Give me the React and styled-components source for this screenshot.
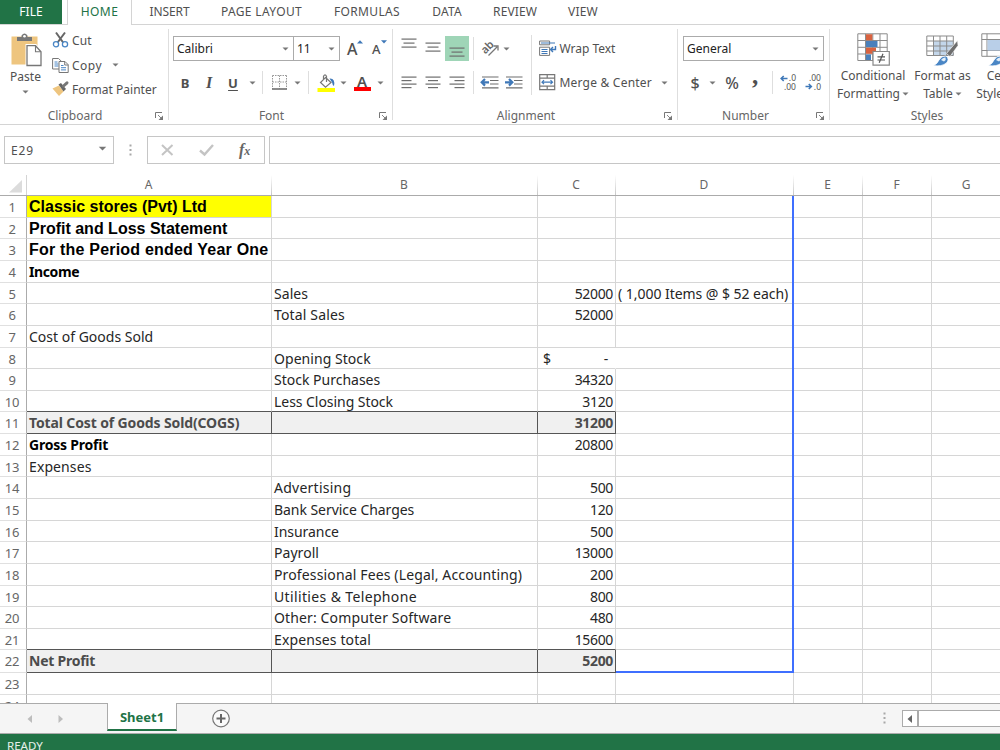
import React from "react";
import styled, { createGlobalStyle } from "styled-components";

const tabs = [
  { name: "HOME", left: 5, width: 65, active: true, spacing: 0.4 },
  { name: "INSERT", left: 4, width: 67, spacing: -0.1 },
  { name: "PAGE LAYOUT", left: 6, width: 105, spacing: 0.35 },
  { name: "FORMULAS", left: 6, width: 94, spacing: 0.35 },
  { name: "DATA", left: 6, width: 54, spacing: 0.2 },
  { name: "REVIEW", left: 5, width: 72, spacing: 0.1 },
  { name: "VIEW", left: 5, width: 54, spacing: 0.2 },
];

const columns = ["A", "B", "C", "D", "E", "F", "G"];

const rows = [
  { h: 22, a: "Classic stores (Pvt) Ltd", kind: "title", mark: true, as: 0 },
  { h: 21, a: "Profit and Loss Statement", kind: "title", as: 0 },
  { h: 22, a: "For the Period ended Year One", kind: "title", as: 0.2 },
  { h: 22, a: "Income", kind: "bold", as: -0.4 },
  { h: 21, b: "Sales", c: "52000", d: "( 1,000 Items @ $ 52 each)" },
  { h: 22, b: "Total Sales", c: "52000", bs: 0.15 },
  { h: 22, a: "Cost of Goods Sold", as: 0 },
  { h: 21, b: "Opening Stock", money: true },
  { h: 22, b: "Stock Purchases", c: "34320", bs: 0 },
  { h: 21, b: "Less Closing Stock", c: "3120", beforeTotal: true, bs: -0.05 },
  { h: 22, a: "Total Cost of Goods Sold(COGS)", c: "31200", kind: "total", as: -0.13 },
  { h: 22, a: "Gross Profit", c: "20800", kind: "bold", as: -0.22 },
  { h: 21, a: "Expenses", as: 0.1 },
  { h: 22, b: "Advertising", c: "500", bs: 0.25 },
  { h: 22, b: "Bank Service Charges", c: "120", bs: -0.05 },
  { h: 21, b: "Insurance", c: "500", bs: -0.05 },
  { h: 22, b: "Payroll", c: "13000" },
  { h: 22, b: "Professional Fees (Legal, Accounting)", c: "200", bs: 0.14 },
  { h: 21, b: "Utilities & Telephone", c: "800", bs: 0.36 },
  { h: 22, b: "Other: Computer Software", c: "480", bs: 0.13 },
  { h: 21, b: "Expenses total", c: "15600", beforeTotal: true, bs: 0.12 },
  { h: 23, a: "Net Profit", c: "5200", kind: "total", as: -0.25 },
  { h: 22 },
  { h: 22 },
];

/* ---------- icons ---------- */

const Caret = () => (
  <svg width="7" height="4" viewBox="0 0 7 4">
    <path d="M0.500 0.500h6l-3 3z" fill="#777" />
  </svg>
);

const PasteIcon = () => (
  <svg width="32" height="34" viewBox="0 0 32 34">
    <rect x="1.500" y="3.500" width="26" height="28" fill="#eec57f" />
    <path d="M7 8V4h4.500V2.500Q14.500-1.500 17.500 2.500V4H22v4z" fill="#777" />
    <circle cx="14.500" cy="3.200" r="1.300" fill="#fff" />
    <path d="M17 12.500h8.500l5 6V32.500H17z" fill="#fff" stroke="#fff" strokeWidth="3" />
    <path d="M17 12.700h8.500l5.500 6V32.500h-14z" fill="#fff" stroke="#777" strokeWidth="1.300" />
    <path d="M25.500 12.700v6h5.500" fill="none" stroke="#777" strokeWidth="1.100" />
  </svg>
);

const CutIcon = () => (
  <svg width="17" height="17" viewBox="0 0 17 17">
    <path d="M4 0.500l7.500 10.500M13 0.500L5.200 11" stroke="#666" strokeWidth="2" fill="none" />
    <circle cx="4" cy="12.300" r="2.600" fill="#fff" stroke="#4a86c5" strokeWidth="1.300" />
    <circle cx="13" cy="12.300" r="2.600" fill="#fff" stroke="#4a86c5" strokeWidth="1.300" />
  </svg>
);

const CopyIcon = () => (
  <svg width="17" height="17" viewBox="0 0 17 17">
    <path d="M0.600 1.500h6l3 3V12H0.600z" fill="#fff" stroke="#777" />
    <path d="M2.500 5h3M2.500 7h4M2.500 9h4" stroke="#4a86c5" />
    <path d="M7 4.500h6l3.200 3.200V15.500H7z" fill="#fff" stroke="#777" />
    <path d="M12.700 4.500v3.500h3.500" fill="none" stroke="#777" />
    <path d="M9 8.500h2.500M9 10.700h5M9 12.900h5" stroke="#4a86c5" />
  </svg>
);

const PainterIcon = () => (
  <svg width="17" height="17" viewBox="0 0 17 17">
    <path d="M0.500 7.500L7 4.500l4.500 6-4.500 4.500z" fill="#eec57f" />
    <path d="M6.500 3.500l2.500-1.500L14 8l-2.500 2.500z" fill="#666" />
    <path d="M11.500 5l3.500-3.200" stroke="#777" strokeWidth="3" strokeLinecap="round" />
  </svg>
);

const LauncherIcon = () => (
  <svg width="9" height="9" viewBox="0 0 9 9">
    <path d="M0.500 6V0.500H7" fill="none" stroke="#777" />
    <path d="M3 3l4 4" stroke="#777" strokeWidth="0.900" />
    <path d="M8 3.500V8H3.500z" fill="#777" />
  </svg>
);

const ResizeMark = ({ down }) => (
  <svg width="6" height="4" viewBox="0 0 6 4">
    <path d={down ? "M0 0.300h6l-3 3.200z" : "M0 3.500h6l-3-3.200z"} fill="#3f78b8" />
  </svg>
);

const BorderIcon = () => (
  <svg width="15" height="15" viewBox="0 0 15 15">
    <path d="M0.500 0.500h14M0.500 7h14M0.500 0.500v13M7.500 0.500v13M14.500 0.500v13" fill="none" stroke="#999" strokeDasharray="1.500 1" />
    <path d="M0 14h15" stroke="#666" strokeWidth="1.500" />
  </svg>
);

const FillIcon = () => (
  <svg width="19" height="18" viewBox="0 0 19 18">
    <path d="M8.500 3.500l5.500 5-5.500 4.700L3.500 8.500z" fill="#fff" stroke="#777" strokeWidth="1.200" />
    <path d="M6.500 5V2.200Q8-0.500 9.500 2.200V8" fill="none" stroke="#777" strokeWidth="1.200" />
    <path d="M12.500 4.500q6-0.500 4.500 7.500-1.500-0.500-1.900-3.500z" fill="#3f78b8" />
    <rect x="0.500" y="14" width="17.500" height="4" fill="#ffff00" />
  </svg>
);

const LinesIcon = ({ lines, gap = 3.5 }) => (
  <svg width="16" height="13" viewBox="0 0 16 13">
    {lines.map(([x, w], i) => (
      <rect key={i} x={x} y={0.5 + i * gap} width={w} height="1.200" fill="#6e6e6e" />
    ))}
  </svg>
);

const vertical = [[0.5, 15], [2.5, 11], [0.5, 15]];
const leftLines = [[0.5, 15], [0.5, 10], [0.5, 15], [0.5, 10]];
const centerLines = [[0.5, 15], [3, 10], [0.5, 15], [3, 10]];
const rightLines = [[0.5, 15], [5.5, 10], [0.5, 15], [5.5, 10]];

const AngleIcon = () => (
  <svg width="19" height="17" viewBox="0 0 19 17">
    <text x="2" y="13" transform="rotate(-45 5 11)" fontFamily="Noto Sans, sans-serif" fontSize="11" fontWeight="600" fill="#666">ab</text>
    <path d="M7.500 15.500L16 7M12.500 6h4.500v4.500" fill="none" stroke="#777" strokeWidth="1.300" />
  </svg>
);

const IndentIcon = ({ more }) => (
  <svg width="18" height="13" viewBox="0 0 18 13">
    <path d="M1 1h16.500M9 4.500h8.500M9 8h8.500M1 11.800h16.500" stroke="#6e6e6e" strokeWidth="1.200" />
    <path d="M0 3h8v6.500H0z" fill="#fff" />
    <path d={more ? "M0 6.300h7M4 3l3.300 3.300L4 9.600" : "M8 6.300H1M4 3L0.700 6.300 4 9.600"} fill="none" stroke="#3f78b8" strokeWidth="2.200" />
  </svg>
);

const WrapIcon = () => (
  <svg width="18" height="17" viewBox="0 0 18 17">
    <path d="M0.600 1h10v3.800h-10zM0.600 7.200h10v8.200h-10z" fill="#fff" stroke="#777" />
    <path d="M2 3h14M2.500 9.500h6M2.500 11.500h6M2.500 13.500h6" stroke="#3f78b8" strokeWidth="1.100" />
    <path d="M16.500 6v3.500H12M14 7l-2.500 2.500L14 12" fill="none" stroke="#3f78b8" strokeWidth="1.400" />
  </svg>
);

const MergeIcon = () => (
  <svg width="17" height="17" viewBox="0 0 17 17">
    <path d="M0.700 0.700h15v15h-15zM0.700 4.200h15M0.700 12.200h15M8.200 0.700v3.500M8.200 12.200v3.500" fill="#fff" stroke="#777" strokeWidth="1.200" />
    <path d="M3 8.200h10.500M5 6.200l-2 2 2 2M11.500 6.200l2 2-2 2" fill="none" stroke="#3f78b8" strokeWidth="1.200" />
  </svg>
);

const DecimalIcon = ({ less }) => (
  <svg width="17" height="17" viewBox="0 0 17 17" fontFamily="Noto Sans, sans-serif" fontSize="8.500" fill="#555">
    <text x="16" y="7" textAnchor="end">{less ? ".00" : ".0"}</text>
    <text x="16" y="15.500" textAnchor="end">{less ? ".0" : ".00"}</text>
    <path
      d={less ? "M0.500 12.500H6M3.800 10L6.300 12.500 3.800 15" : "M7.500 4.500H1.500M3.700 2L1.200 4.500l2.500 2.500"}
      fill="none"
      stroke="#3f78b8"
      strokeWidth="1.600"
    />
  </svg>
);

const ConditionalIcon = () => (
  <svg width="33" height="34" viewBox="0 0 33 34">
    <path d="M0.800 0.800h29.400v26.700H0.800zM0.800 7.500h29.400M0.800 14.300h29.400M0.800 21h29.400M8.500 0.800v26.700M15.800 0.800v26.700M23 0.800v26.700" fill="#fff" stroke="#8b8b8b" />
    <path d="M9 1.300h6.300v6H9zM9 14.800h10v6H9z" fill="#d9623f" />
    <path d="M9 8h11.500v6H9zM9 21.500h5v5.500H9z" fill="#4a80bb" />
    <path d="M16 18.500h16.300v13.700H16z" fill="#fff" stroke="#888" strokeWidth="1.200" />
    <path d="M20.500 23.800h7.500M20.500 27h7.500M26 20.800l-3.800 9" stroke="#555" strokeWidth="1.200" />
  </svg>
);

const brush = (
  <>
    <path d="M20.500 20.500l11-13 0.500 5-8 11z" fill="#6e6e6e" stroke="#fff" strokeWidth="0.600" />
    <path d="M7 32.500q4-1 6-5.500 2.500-4.500 7-4 4 3 0.500 7-5 4-13.500 2.500z" fill="#4a86c5" stroke="#fff" strokeWidth="0.800" />
    <path d="M15 27q2-3 4.500-2.500 1 2-1.500 4z" fill="#e3eef8" />
  </>
);

const TableIcon = () => (
  <svg width="33" height="34" viewBox="0 0 33 34">
    <path d="M7 8h20.500v14.500H7z" fill="#c3d6ea" />
    <path d="M0.800 3h26.500v19.500H0.800zM0.800 8h26.500M0.800 13h26.500M0.800 18h26.500M7.500 3v19.500M14 3v19.500M20.700 3v19.500" fill="none" stroke="#8b8b8b" />
    {brush}
  </svg>
);

const CellStylesIcon = () => (
  <svg width="33" height="34" viewBox="0 0 33 34">
    <path d="M0.800 0.800h30v22.500h-30zM0.800 6.500h30M0.800 17.500h30M6 0.800v22.500" fill="#fff" stroke="#8b8b8b" />
    <path d="M6.500 7h24v10.500h-24z" fill="#b9cfe8" />
    {brush}
  </svg>
);

const Triangle = ({ right, color }) => (
  <svg width="6" height="8" viewBox="0 0 6 8">
    <path d={right ? "M0.500 0v8L5 4z" : "M5 0v8L0.500 4z"} fill={color} />
  </svg>
);

const Dots = () => (
  <svg width="3" height="13" viewBox="0 0 3 13">
    <path d="M0.500 0.500h2v2h-2zM0.500 5h2v2h-2zM0.500 9.500h2v2h-2z" fill="#a8a8a8" />
  </svg>
);

const AddSheetIcon = () => (
  <svg width="19" height="19" viewBox="0 0 19 19">
    <circle cx="9" cy="9.500" r="8.300" fill="#fafafa" stroke="#777" strokeWidth="1.200" />
    <path d="M4.500 9.500h9M9 5v9" stroke="#666" strokeWidth="2" />
  </svg>
);

/* ---------- page ---------- */

function ClipboardGroup() {
  return (
    <Group $width={169}>
      <GroupBody>
        <BigButton $width={51} $gap={1}>
          <PasteIcon />
          <BigLabel>Paste</BigLabel>
          <Caret />
        </BigButton>
        <SmallButtons>
          <SmallButton><CutIcon /><span>Cut</span></SmallButton>
          <SmallButton $spacing={0.5}><CopyIcon /><span>Copy</span><Caret /></SmallButton>
          <SmallButton $spacing={0.02}><PainterIcon /><span>Format Painter</span></SmallButton>
        </SmallButtons>
      </GroupBody>
      <GroupLabel $shift={-9}>Clipboard</GroupLabel>
      <Launcher><LauncherIcon /></Launcher>
    </Group>
  );
}

function FontGroup() {
  return (
    <Group $width={224}>
      <Stack>
        <Line>
          <Combo $width={121}>Calibri<Caret /></Combo>
          <Combo $width={47} $joined>11<Caret /></Combo>
          <FontSizer $size={16}>A<ResizeMark /></FontSizer>
          <FontSizer $size={13}>A<ResizeMark down /></FontSizer>
        </Line>
        <Line>
          <Letter $bold>B</Letter>
          <Letter $italic>I</Letter>
          <Letter $bold $under>U</Letter>
          <Slot $width={14}><Caret /></Slot>
          <Divider $before={3} $after={4} />
          <Slot $width={24}><BorderIcon /></Slot>
          <Slot $width={13}><Caret /></Slot>
          <Divider $before={4} $after={5} />
          <Slot $width={24}><FillIcon /></Slot>
          <Slot $width={11}><Caret /></Slot>
          <Slot $width={26}><FontColor>A</FontColor></Slot>
          <Slot $width={11}><Caret /></Slot>
        </Line>
      </Stack>
      <GroupLabel $shift={-9}>Font</GroupLabel>
      <Launcher><LauncherIcon /></Launcher>
    </Group>
  );
}

function AlignmentGroup() {
  return (
    <Group $width={285}>
      <GroupBody>
        <Stack>
          <Line>
            <Slot $width={24} $lift={-4}><LinesIcon lines={vertical} gap={4} /></Slot>
            <Slot $width={24}><LinesIcon lines={vertical} gap={4} /></Slot>
            <Slot $width={24} $on $lift={5}><LinesIcon lines={vertical} gap={4} /></Slot>
            <Divider $before={4} $after={4} />
            <Slot $width={24}><AngleIcon /></Slot>
            <Slot $width={8}><Caret /></Slot>
          </Line>
          <Line>
            <Slot $width={24}><LinesIcon lines={leftLines} /></Slot>
            <Slot $width={24}><LinesIcon lines={centerLines} /></Slot>
            <Slot $width={24}><LinesIcon lines={rightLines} /></Slot>
            <Divider $before={4} $after={4} />
            <Slot $width={24}><IndentIcon /></Slot>
            <Slot $width={24}><IndentIcon more /></Slot>
          </Line>
        </Stack>
        <TallDivider />
        <Stack $pad={8}>
          <Line><WrapIcon /><LineText $left={2}>Wrap Text</LineText></Line>
          <Line><MergeIcon /><LineText $left={3} $spacing={0.22}>Merge &amp; Center</LineText><Slot $width={25}><Caret /></Slot></Line>
        </Stack>
      </GroupBody>
      <GroupLabel $shift={-9}>Alignment</GroupLabel>
      <Launcher><LauncherIcon /></Launcher>
    </Group>
  );
}

function NumberGroup() {
  return (
    <Group $width={152}>
      <Stack $pad={5}>
        <Line><Combo $width={141}>General<Caret /></Combo></Line>
        <Line>
          <Symbol $width={24} $size={16}>$</Symbol>
          <Slot $width={11}><Caret /></Slot>
          <Symbol $width={28} $size={16}>%</Symbol>
          <Symbol $width={18} $size={25} $serif>,</Symbol>
          <Divider $before={8} $after={4} />
          <Slot $width={23}><DecimalIcon /></Slot>
          <Slot $width={26}><DecimalIcon less /></Slot>
        </Line>
      </Stack>
      <GroupLabel $shift={-8}>Number</GroupLabel>
      <Launcher><LauncherIcon /></Launcher>
    </Group>
  );
}

function StylesGroup() {
  return (
    <Group $width={194} $last>
      <GroupBody>
        <BigButton $width={86}>
          <ConditionalIcon />
          <BigLabel>Conditional</BigLabel>
          <BigLabel>Formatting<Caret /></BigLabel>
        </BigButton>
        <BigButton $width={53}>
          <TableIcon />
          <BigLabel>Format as</BigLabel>
          <BigLabel>Table<Caret /></BigLabel>
        </BigButton>
        <BigButton $width={56}>
          <CellStylesIcon />
          <BigLabel>Cell</BigLabel>
          <BigLabel>Styles<Caret /></BigLabel>
        </BigButton>
      </GroupBody>
      <GroupLabel $shift={0}>Styles</GroupLabel>
    </Group>
  );
}

function Sheet() {
  return (
    <SheetArea>
      <ColumnHeads>
        <Corner><svg width="14" height="13" viewBox="0 0 14 13"><path d="M13 0v12.500H0z" fill="#dcdcdc" /></svg></Corner>
        {columns.map((c) => <ColumnHead key={c}>{c}</ColumnHead>)}
      </ColumnHeads>
      <Rows>
        {rows.map((r, i) => {
          const total = r.kind === "total";
          const edge = total || r.beforeTotal;
          return (
            <Row key={i} $height={r.h}>
              <RowHead>{i + 1}</RowHead>
              <Cell $kind={r.kind} $fill={r.mark ? "#ffff00" : total && "#f0f0f0"} $edge={edge} $side={total} $spacing={r.as}>{r.a}</Cell>
              <Cell $fill={total && "#f0f0f0"} $edge={edge} $side={total} $spacing={r.bs}>{r.b}</Cell>
              <Cell $number $kind={total ? "total" : ""} $fill={total && "#f0f0f0"} $edge={edge} $side={total} $open={r.money}>
                {r.money ? <Money><span>$</span><span>-</span></Money> : r.c}
              </Cell>
              <Cell $spacing={-0.04}>{r.d}</Cell>
              <Cell /><Cell /><Cell />
            </Row>
          );
        })}
        <RangeSide />
        <RangeBottom />
      </Rows>
    </SheetArea>
  );
}

function App() {
  return (
    <Window>
      <GlobalStyle />
      <TabBar>
        <FileTab>FILE</FileTab>
        {tabs.map((t) => (
          <Tab key={t.name} $active={t.active} $left={t.left} $width={t.width} $spacing={t.spacing}>{t.name}</Tab>
        ))}
      </TabBar>
      <Ribbon>
        <ClipboardGroup />
        <FontGroup />
        <AlignmentGroup />
        <NumberGroup />
        <StylesGroup />
      </Ribbon>
      <FormulaBar>
        <NameBox>E29<Caret /></NameBox>
        <DotsSlot><Dots /></DotsSlot>
        <FormulaTools>
          <svg width="13" height="12" viewBox="0 0 13 12"><path d="M1 1l10.500 10M11.500 1L1 11" stroke="#c4c4c4" strokeWidth="2" /></svg>
          <svg width="15" height="12" viewBox="0 0 15 12"><path d="M1 6.500l4.500 4L14 1" fill="none" stroke="#c4c4c4" strokeWidth="2.400" /></svg>
          <Fx>f<small>x</small></Fx>
        </FormulaTools>
        <FormulaInput />
      </FormulaBar>
      <Sheet />
      <SheetTabs>
        <Arrows><Triangle color="#bdbdbd" /><Triangle right color="#bdbdbd" /></Arrows>
        <SheetTab>Sheet1</SheetTab>
        <AddSheet><AddSheetIcon /></AddSheet>
        <ScrollPart>
          <Dots />
          <ScrollArrow><Triangle color="#666" /></ScrollArrow>
          <ScrollTrack />
        </ScrollPart>
      </SheetTabs>
      <StatusBar>READY</StatusBar>
    </Window>
  );
}

export default App;

const GlobalStyle = createGlobalStyle`
  * {
    box-sizing: border-box;
  }
  body {
    margin: 0;
    overflow: hidden;
  }
  svg {
    display: block;
    flex-shrink: 0;
    overflow: visible;
  }
`;

const Window = styled.div`
  background: white;
  color: #505050;
  display: flex;
  flex-direction: column;
  font-family: "Noto Sans", "Open Sans", sans-serif;
  font-size: 12px;
  height: 750px;
  overflow: hidden;
  white-space: nowrap;
  width: 1000px;
`;

const TabBar = styled.nav`
  display: flex;
  flex-shrink: 0;
  height: 25px;
  box-shadow: inset 0 -1px #d4d4d4;
`;

const FileTab = styled.div`
  background: #217346;
  color: white;
  height: 24px;
  line-height: 23px;
  text-align: center;
  width: 62px;
`;

const Tab = styled.div`
  background: ${(p) => (p.$active ? "white" : "transparent")};
  border: solid ${(p) => (p.$active ? "#d4d4d4" : "transparent")};
  border-width: 0 1px;
  color: ${(p) => (p.$active ? "#217346" : "#505050")};
  letter-spacing: ${(p) => p.$spacing}px;
  line-height: 23px;
  margin-left: ${(p) => p.$left}px;
  text-align: center;
  width: ${(p) => p.$width}px;
`;

const Ribbon = styled.div`
  border-bottom: 1px solid #d4d4d4;
  display: flex;
  flex-shrink: 0;
  height: 100px;
  padding: 4px 0;
`;

const Group = styled.section`
  border-right: ${(p) => (p.$last ? "0" : "1px solid #dedede")};
  flex-shrink: 0;
  height: 91px;
  position: relative;
  width: ${(p) => p.$width}px;
`;

const GroupBody = styled.div`
  display: flex;
  height: 76px;
`;

const GroupLabel = styled.div`
  bottom: -4px;
  color: #666;
  left: 0;
  line-height: 16px;
  position: absolute;
  right: 0;
  text-align: center;
  text-indent: ${(p) => p.$shift * 2}px;
`;

const Launcher = styled.div`
  bottom: -1px;
  position: absolute;
  right: 4px;
`;

const BigButton = styled.div`
  align-items: center;
  display: flex;
  flex-direction: column;
  flex-shrink: 0;
  gap: ${(p) => p.$gap || 0}px;
  padding-top: 4px;
  width: ${(p) => p.$width}px;
`;

const BigLabel = styled.span`
  align-items: center;
  display: flex;
  gap: 2px;
  height: 18px;
  line-height: 18px;
  position: relative;
  & + svg {
    margin-top: 3px;
  }
`;

const SmallButtons = styled.div`
  display: flex;
  flex-direction: column;
`;

const SmallButton = styled.div`
  align-items: center;
  display: flex;
  gap: 3px;
  height: 24.5px;
  letter-spacing: ${(p) => p.$spacing || 0.1}px;
  padding-left: 1px;
  &:first-child {
    height: 24px;
    padding-bottom: 1px;
  }
  & span + svg {
    margin-left: 7px;
  }
`;

const Stack = styled.div`
  display: flex;
  flex-direction: column;
  gap: 9px;
  padding: 7px 0 0 ${(p) => p.$pad || 4}px;
`;

const Line = styled.div`
  align-items: center;
  display: flex;
  height: 25px;
`;

const LineText = styled.span`
  letter-spacing: ${(p) => p.$spacing || 0}px;
  margin-left: ${(p) => p.$left}px;
`;

const Combo = styled.div`
  align-items: center;
  border: 1px solid #ababab;
  color: #222;
  display: flex;
  height: 25px;
  justify-content: space-between;
  margin-left: ${(p) => (p.$joined ? -1 : 0)}px;
  padding: 0 4px 0 3px;
  width: ${(p) => p.$width}px;
`;

const FontSizer = styled.div`
  display: flex;
  font-size: ${(p) => p.$size}px;
  font-weight: 500;
  line-height: 22px;
  padding-left: 7px;
  width: 25px;
  & svg {
    margin-top: 2px;
  }
`;

const Slot = styled.div`
  align-items: center;
  background: ${(p) => (p.$on ? "#9fd5b7" : "transparent")};
  display: flex;
  flex-shrink: 0;
  height: 25px;
  justify-content: center;
  width: ${(p) => p.$width}px;
  & svg {
    margin-top: ${(p) => (p.$lift || 0) * 2}px;
  }
`;

const Letter = styled(Slot).attrs({ $width: 24 })`
  font-family: ${(p) => (p.$italic ? '"Liberation Serif", serif' : "inherit")};
  font-size: ${(p) => (p.$italic ? 16 : 13)}px;
  font-style: ${(p) => (p.$italic ? "italic" : "normal")};
  font-weight: bold;
  text-decoration: ${(p) => (p.$under ? "underline" : "none")};
  text-underline-offset: 2px;
`;

const FontColor = styled.div`
  border-bottom: 4px solid #f00;
  font-size: 15px;
  font-weight: 600;
  height: 17px;
  line-height: 14px;
  text-align: center;
  width: 17px;
`;

const Symbol = styled(Slot)`
  font-family: ${(p) => (p.$serif ? '"Liberation Serif", serif' : "inherit")};
  font-size: ${(p) => p.$size}px;
  font-weight: ${(p) => (p.$serif ? "bold" : 500)};
  padding-bottom: ${(p) => (p.$serif ? 14 : 0)}px;
`;

const Divider = styled.div`
  background: #dedede;
  height: 23px;
  margin: 0 ${(p) => p.$after}px 0 ${(p) => p.$before}px;
  width: 1px;
`;

const TallDivider = styled.div`
  background: #dedede;
  height: 60px;
  margin: 6px 0 0 5px;
  width: 1px;
`;

const FormulaBar = styled.div`
  display: flex;
  flex-shrink: 0;
  height: 50px;
  padding: 11px 0 0 4px;
`;

const NameBox = styled.div`
  align-items: center;
  border: 1px solid #c6c6c6;
  display: flex;
  height: 28px;
  justify-content: space-between;
  letter-spacing: 0.8px;
  padding: 0 6px;
  width: 110px;
  & svg {
    height: 5px;
    margin-bottom: 3px;
    width: 9px;
  }
`;

const DotsSlot = styled.div`
  align-items: center;
  display: flex;
  height: 28px;
  justify-content: center;
  width: 33px;
`;

const FormulaTools = styled.div`
  align-items: center;
  border: 1px solid #c6c6c6;
  display: flex;
  gap: 25px;
  height: 28px;
  padding-left: 13px;
  width: 118px;
`;

const Fx = styled.span`
  color: #666;
  font-family: "Liberation Serif", serif;
  font-size: 16px;
  font-style: italic;
  font-weight: bold;
  line-height: 20px;
  & small {
    font-size: 12px;
  }
`;

const FormulaInput = styled.div`
  border: 1px solid #c6c6c6;
  border-right: 0;
  flex: 1;
  height: 28px;
  margin-left: 4px;
`;

const SheetArea = styled.main`
  height: 528px;
  overflow: hidden;
`;

const ColumnHeads = styled.div`
  border-bottom: 1px solid #ababab;
  display: grid;
  grid-template-columns: 27px 245px 266px 78px 178px 69px 69px 70px;
  height: 21px;
`;

const Corner = styled.div`
  border-right: 1px solid #d4d4d4;
  padding: 5px 0 0 9px;
`;

const ColumnHead = styled.div`
  background: linear-gradient(#fff, #c8c8c8) right / 1px 100% no-repeat;
  color: #666;
  line-height: 20px;
  padding-right: 2px;
  text-align: center;
`;

const Rows = styled.div`
  position: relative;
`;

const Row = styled.div`
  display: grid;
  grid-template-columns: 27px 245px 266px 78px 178px 69px 69px 70px;
  grid-template-rows: 100%;
  height: ${(p) => p.$height}px;
`;

const RowHead = styled.div`
  border-bottom: 1px solid #e0e0e0;
  border-right: 1px solid #ababab;
  color: #666;
  font-size: 13px;
  letter-spacing: -0.3px;
  line-height: 22px;
  padding-right: 2px;
  text-align: center;
`;

const cellFonts = {
  title: "bold 16px 'Liberation Sans', sans-serif",
  bold: "bold 14px 'Noto Sans', sans-serif",
  total: "bold 14px 'Noto Sans', sans-serif",
};

const Cell = styled.div`
  background: ${(p) => p.$fill || "white"};
  border-bottom: 1px solid ${(p) => (p.$edge ? "#555" : "#d6d6d6")};
  border-right: 1px solid ${(p) => (p.$side ? "#555" : p.$open ? "white" : "#d6d6d6")};
  color: ${(p) => (p.$kind === "total" ? "#4c4c4c" : p.$kind ? "#000" : "#262626")};
  font: ${(p) => cellFonts[p.$kind] || "14px 'Noto Sans', sans-serif"};
  letter-spacing: ${(p) => (p.$number ? -0.35 : p.$spacing ?? 0.05)}px;
  line-height: 22px;
  min-width: 0;
  padding: 0 2px;
  text-align: ${(p) => (p.$number ? "right" : "left")};
`;

const Money = styled.div`
  display: flex;
  justify-content: space-between;
  padding: 0 5px 0 3px;
`;

const RangeSide = styled.div`
  background: #3f6fff;
  height: 477px;
  left: 792px;
  position: absolute;
  top: 0;
  width: 2px;
`;

const RangeBottom = styled.div`
  background: #3f6fff;
  height: 2px;
  left: 616px;
  position: absolute;
  top: 475px;
  width: 178px;
`;

const SheetTabs = styled.div`
  background: #f5f5f5;
  border: solid #ababab;
  border-width: 1px 0;
  display: flex;
  flex-shrink: 0;
  height: 31px;
`;

const Arrows = styled.div`
  align-items: center;
  display: flex;
  gap: 25px;
  height: 29px;
  padding-left: 27px;
  width: 107px;
`;

const SheetTab = styled.div`
  background: white;
  border: 1px solid #ababab;
  border-bottom: 2px solid #217346;
  border-top: 0;
  color: #217346;
  font-size: 13px;
  font-weight: bold;
  height: 28px;
  line-height: 28px;
  margin-top: -1px;
  text-align: center;
  width: 70px;
`;

const AddSheet = styled.div`
  padding: 5px 0 0 35px;
`;

const ScrollPart = styled.div`
  align-items: center;
  display: flex;
  height: 29px;
  margin-left: auto;
`;

const ScrollArrow = styled.div`
  align-items: center;
  background: white;
  border: 1px solid #ababab;
  display: flex;
  height: 17px;
  justify-content: center;
  margin-left: 16px;
  width: 16px;
`;

const ScrollTrack = styled.div`
  background: white;
  border: 1px solid #ababab;
  border-right: 0;
  height: 17px;
  width: 82px;
`;

const StatusBar = styled.footer`
  background: #217346;
  color: #e6f0ea;
  flex-shrink: 0;
  font-size: 11.500px;
  height: 16px;
  line-height: 23px;
  overflow: hidden;
  padding-left: 7px;
`;
